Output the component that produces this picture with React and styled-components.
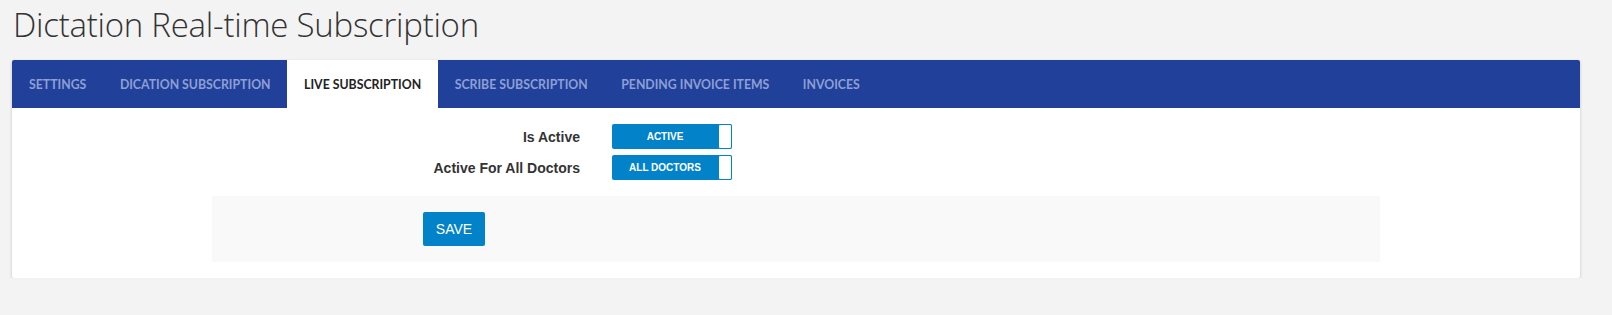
import React, { useState } from "react";
import styled, { createGlobalStyle } from "styled-components";

const GlobalStyle = createGlobalStyle`
  body {
    margin: 0;
    background: #f3f3f3;
    font-family: "Liberation Sans", Arial, sans-serif;
  }
`;

const tabs = [
  "Settings",
  "Dication Subscription",
  "Live Subscription",
  "Scribe Subscription",
  "Pending Invoice Items",
  "Invoices",
];

const App = () => {
  const [active, setActive] = useState(2);
  const [isActive, setIsActive] = useState(true);
  const [allDoctors, setAllDoctors] = useState(true);

  return (
    <PAGE>
      <GlobalStyle />
      <Title>Dictation Real-time Subscription</Title>
      <Card>
        <TabBar>
          {tabs.map((t, i) => (
            <Tab key={t} $active={i === active} onClick={() => setActive(i)}>
              {t}
            </Tab>
          ))}
        </TabBar>
        <Body>
          <FormRow>
            <Label>Is Active</Label>
            <Toggle onClick={() => setIsActive(!isActive)}>
              <span>{isActive ? "ACTIVE" : "INACTIVE"}</span>
              <Knob />
            </Toggle>
          </FormRow>
          <FormRow>
            <Label>Active For All Doctors</Label>
            <Toggle onClick={() => setAllDoctors(!allDoctors)}>
              <span>{allDoctors ? "ALL DOCTORS" : "SELECTED"}</span>
              <Knob />
            </Toggle>
          </FormRow>
          <Footer>
            <SaveButton>SAVE</SaveButton>
          </Footer>
        </Body>
      </Card>
    </PAGE>
  );
};

export default App;

const PAGE = styled.div`
  padding: 0 32px 0 12px;
`;

const Title = styled.h1`
  margin: 0;
  padding: 2px 0 0 1px;
  height: 56px;
  box-sizing: border-box;
  font-family: "Open Sans", sans-serif;
  font-weight: 300;
  font-size: 33px;
  letter-spacing: -0.25px;
  color: #333;
`;

const Card = styled.div`
  background: #fff;
  border-radius: 2px;
  box-shadow: 0 1px 3px rgba(0, 0, 0, 0.2);
  height: 218px;
  margin-top: 4px;
`;

const TabBar = styled.div`
  display: flex;
  height: 48px;
  background: #21409a;
  border-radius: 2px 2px 0 0;
`;

const Tab = styled.div`
  display: flex;
  align-items: center;
  padding: 0 16.5px 0 17px;
  font-family: "Lato", sans-serif;
  font-weight: 700;
  font-size: 12.3px;
  text-transform: uppercase;
  cursor: pointer;
  background: ${(p) => (p.$active ? "#fff" : "transparent")};
  color: ${(p) => (p.$active ? "#222" : "#8d9fd3")};
`;

const Body = styled.div`
  padding: 16px 200px 0;
`;

const FormRow = styled.div`
  display: flex;
  align-items: center;
  height: 25px;
  margin-bottom: 6px;
`;

const Label = styled.label`
  width: 368px;
  text-align: right;
  font-size: 14px;
  font-weight: 700;
  color: #333;
  margin-right: 32px;
`;

const Toggle = styled.div`
  display: flex;
  align-items: center;
  width: 120px;
  height: 25px;
  box-sizing: border-box;
  background: #0282c9;
  border-radius: 2px;
  cursor: pointer;
  span {
    flex: 1;
    text-align: center;
    color: #fff;
    font-size: 10px;
    font-weight: 700;
  }
`;

const Knob = styled.div`
  width: 14px;
  height: 25px;
  box-sizing: border-box;
  background: #fff;
  border: 1px solid #0282c9;
  border-radius: 2px;
`;

const Footer = styled.div`
  margin-top: 16px;
  height: 66px;
  background: #f9f9f9;
  display: flex;
  align-items: center;
  padding-left: 211px;
`;

const SaveButton = styled.button`
  width: 62px;
  height: 34px;
  border: none;
  border-radius: 2px;
  background: #0282c9;
  color: #fff;
  font-family: "Liberation Sans", Arial, sans-serif;
  font-size: 14px;
  cursor: pointer;
`;
